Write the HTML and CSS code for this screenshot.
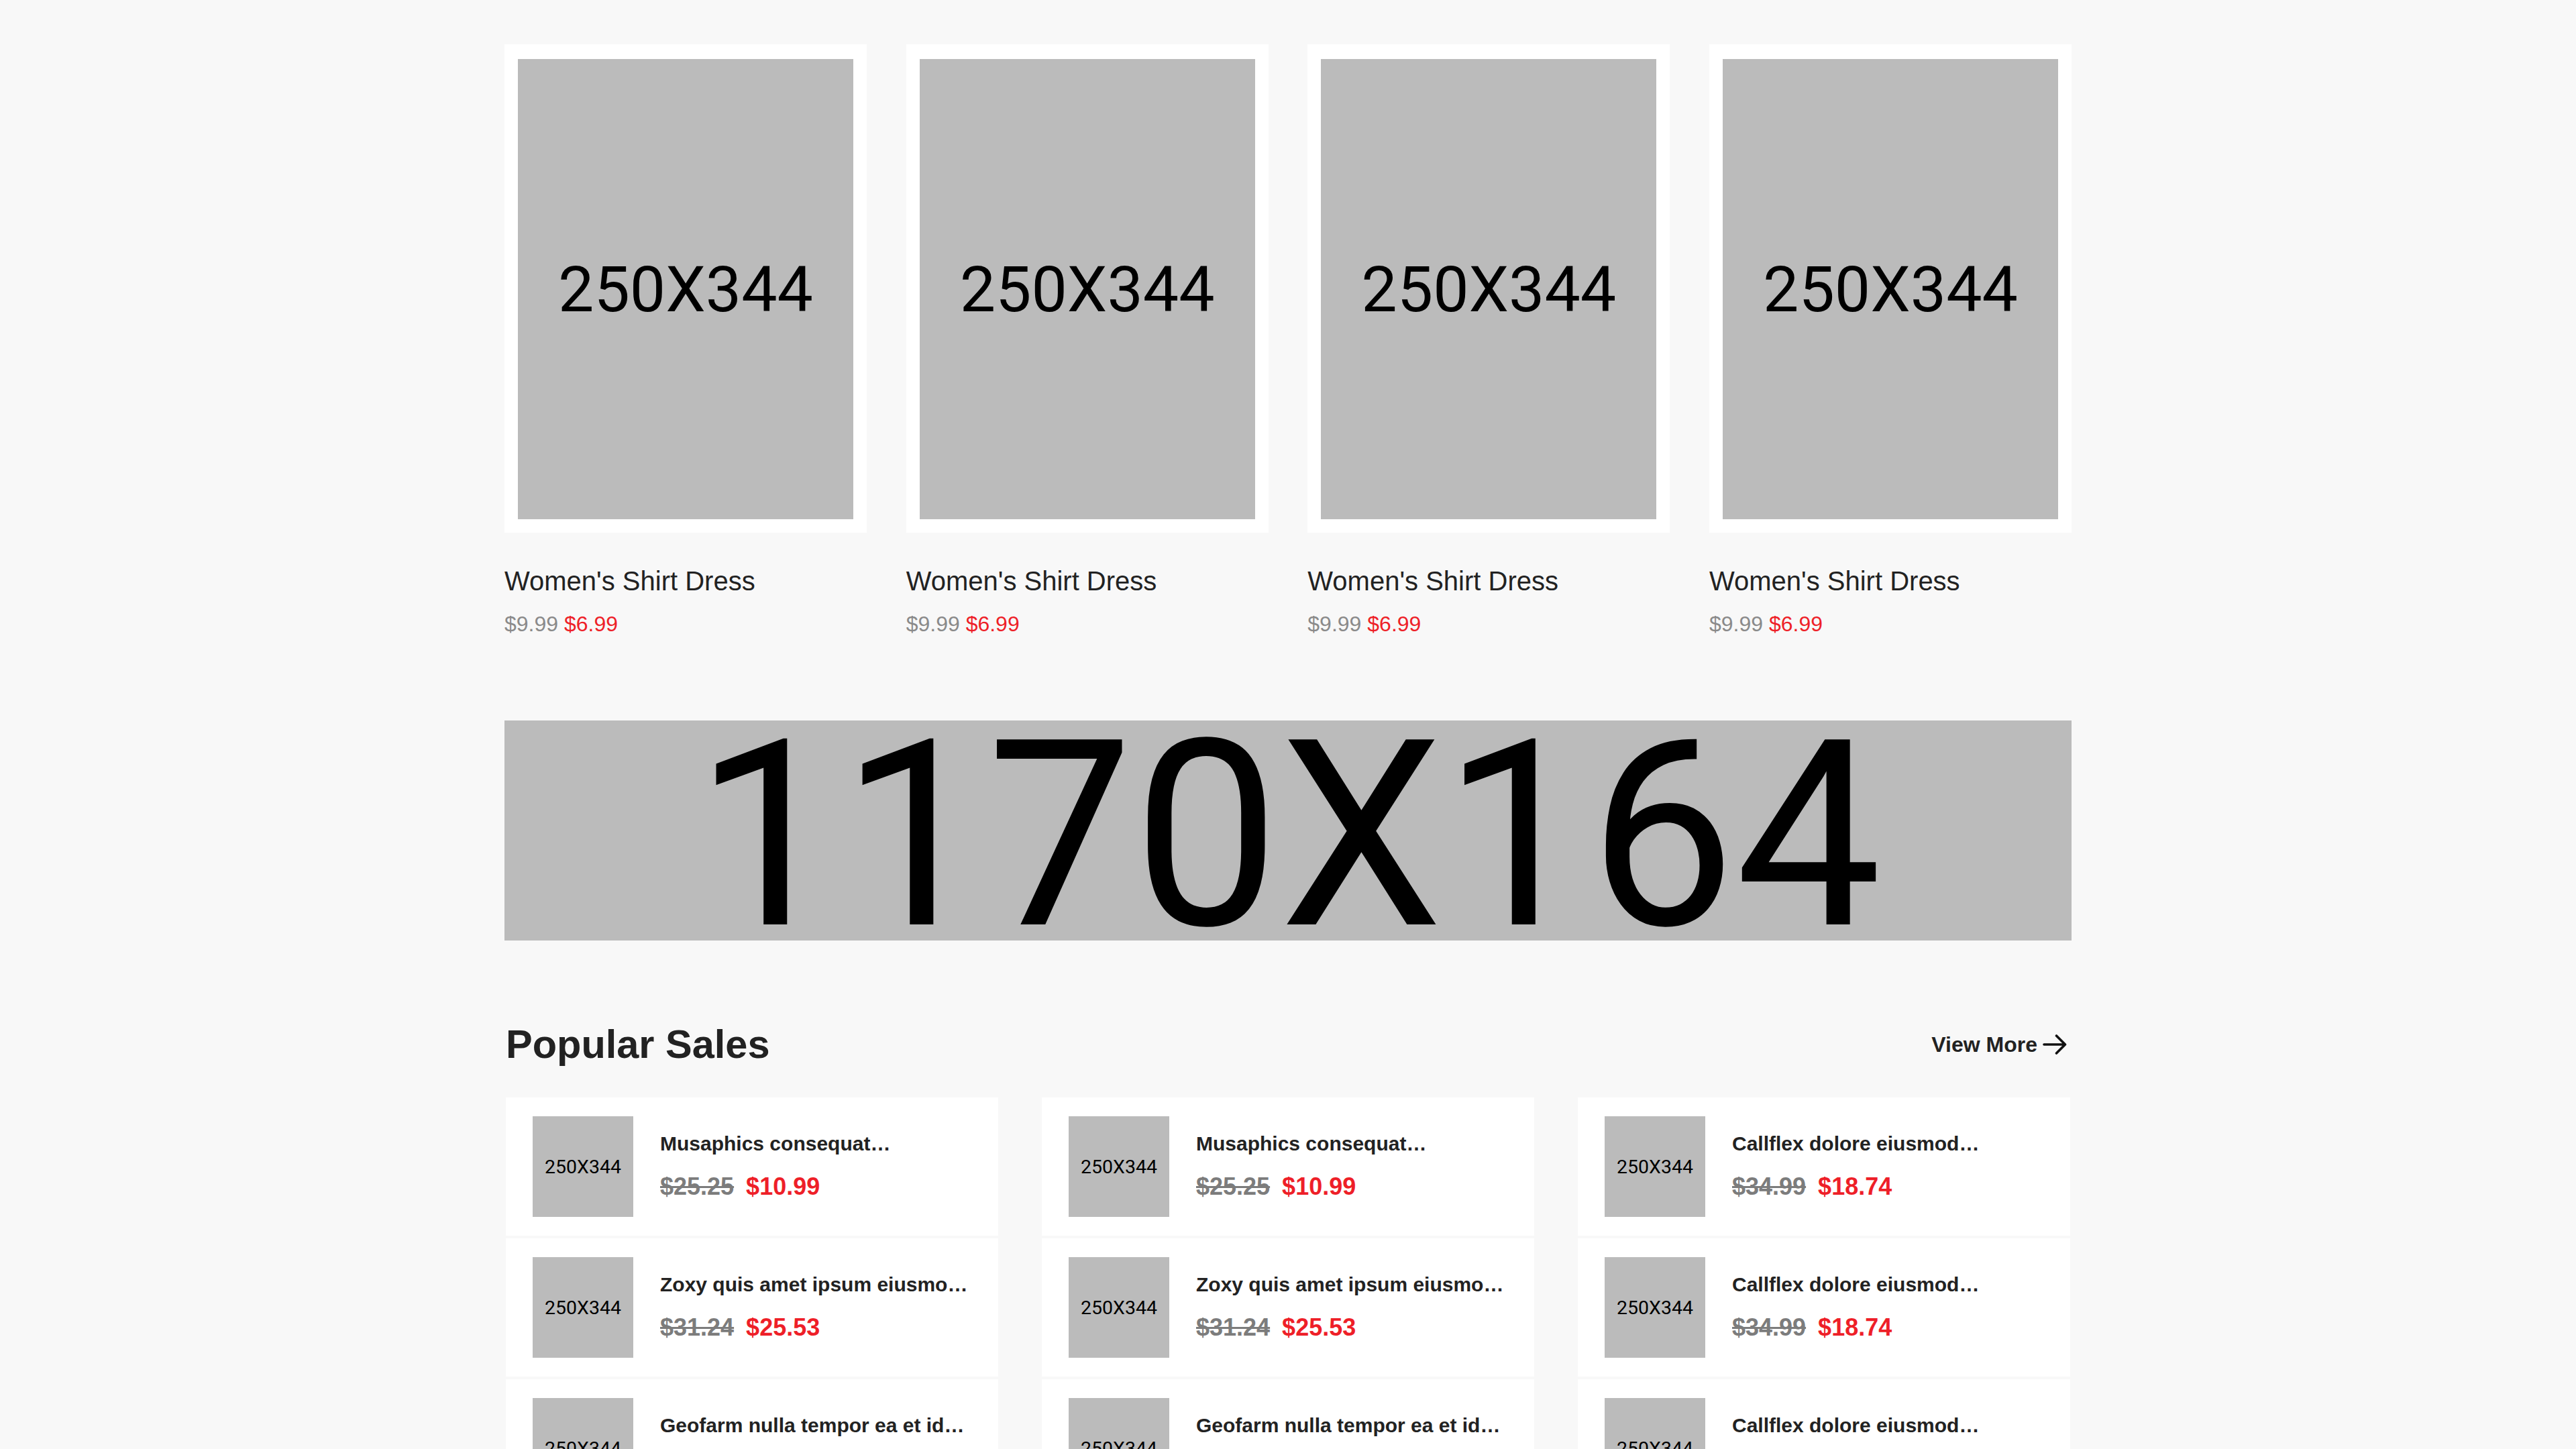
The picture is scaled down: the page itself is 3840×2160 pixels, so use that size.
FILE: index.html
```html
<!DOCTYPE html>
<html lang="en">
<head>
<meta charset="utf-8">
<title>Shop</title>
<link rel="stylesheet" href="styles.css">
</head>
<body>
<main class="page">
  <section class="products">
    <article class="product">
      <div class="product-card"><div class="ph ph-product">250X344</div></div>
      <h3 class="product-title">Women's Shirt Dress</h3>
      <div class="product-price"><span class="old">$9.99</span> <span class="new">$6.99</span></div>
    </article>
    <article class="product">
      <div class="product-card"><div class="ph ph-product">250X344</div></div>
      <h3 class="product-title">Women's Shirt Dress</h3>
      <div class="product-price"><span class="old">$9.99</span> <span class="new">$6.99</span></div>
    </article>
    <article class="product">
      <div class="product-card"><div class="ph ph-product">250X344</div></div>
      <h3 class="product-title">Women's Shirt Dress</h3>
      <div class="product-price"><span class="old">$9.99</span> <span class="new">$6.99</span></div>
    </article>
    <article class="product">
      <div class="product-card"><div class="ph ph-product">250X344</div></div>
      <h3 class="product-title">Women's Shirt Dress</h3>
      <div class="product-price"><span class="old">$9.99</span> <span class="new">$6.99</span></div>
    </article>
  </section>

  <div class="banner ph">1170X164</div>

  <section class="popular">
    <header class="popular-head">
      <h2 class="popular-title">Popular Sales</h2>
      <a class="view-more" href="#">View More
        <svg class="arrow" viewBox="0 0 36 36" width="36" height="36" aria-hidden="true">
          <path d="M2 18 H33 M20.5 5 L33.5 18 L20.5 31" fill="none" stroke="#111" stroke-width="3.6" stroke-linecap="round" stroke-linejoin="round"/>
        </svg>
      </a>
    </header>
    <div class="sales-grid">
      <div class="sale-col">
        <div class="sale-item">
          <div class="ph ph-thumb">250X344</div>
          <div class="sale-info">
            <div class="sale-name">Musaphics consequat…</div>
            <div class="sale-price"><span class="old">$25.25</span><span class="new">$10.99</span></div>
          </div>
        </div>
        <div class="sale-item">
          <div class="ph ph-thumb">250X344</div>
          <div class="sale-info">
            <div class="sale-name">Zoxy quis amet ipsum eiusmo…</div>
            <div class="sale-price"><span class="old">$31.24</span><span class="new">$25.53</span></div>
          </div>
        </div>
        <div class="sale-item">
          <div class="ph ph-thumb">250X344</div>
          <div class="sale-info">
            <div class="sale-name">Geofarm nulla tempor ea et id…</div>
            <div class="sale-price"><span class="old">$28.99</span><span class="new">$19.99</span></div>
          </div>
        </div>
      </div>
      <div class="sale-col">
        <div class="sale-item">
          <div class="ph ph-thumb">250X344</div>
          <div class="sale-info">
            <div class="sale-name">Musaphics consequat…</div>
            <div class="sale-price"><span class="old">$25.25</span><span class="new">$10.99</span></div>
          </div>
        </div>
        <div class="sale-item">
          <div class="ph ph-thumb">250X344</div>
          <div class="sale-info">
            <div class="sale-name">Zoxy quis amet ipsum eiusmo…</div>
            <div class="sale-price"><span class="old">$31.24</span><span class="new">$25.53</span></div>
          </div>
        </div>
        <div class="sale-item">
          <div class="ph ph-thumb">250X344</div>
          <div class="sale-info">
            <div class="sale-name">Geofarm nulla tempor ea et id…</div>
            <div class="sale-price"><span class="old">$28.99</span><span class="new">$19.99</span></div>
          </div>
        </div>
      </div>
      <div class="sale-col">
        <div class="sale-item">
          <div class="ph ph-thumb">250X344</div>
          <div class="sale-info">
            <div class="sale-name">Callflex dolore eiusmod…</div>
            <div class="sale-price"><span class="old">$34.99</span><span class="new">$18.74</span></div>
          </div>
        </div>
        <div class="sale-item">
          <div class="ph ph-thumb">250X344</div>
          <div class="sale-info">
            <div class="sale-name">Callflex dolore eiusmod…</div>
            <div class="sale-price"><span class="old">$34.99</span><span class="new">$18.74</span></div>
          </div>
        </div>
        <div class="sale-item">
          <div class="ph ph-thumb">250X344</div>
          <div class="sale-info">
            <div class="sale-name">Callflex dolore eiusmod…</div>
            <div class="sale-price"><span class="old">$34.99</span><span class="new">$18.74</span></div>
          </div>
        </div>
      </div>
    </div>
  </section>
</main>
</body>
</html>
```

FILE: styles.css
```css
html, body {
  margin: 0;
  padding: 0;
}
body {
  background: #f8f8f8;
  font-family: "Liberation Sans", Arial, sans-serif;
  color: #222;
}
.page {
  width: 2336px;
  margin: 0 auto;
  padding-top: 66px;
}

/* placeholder images */
.ph {
  background: #bbbbbb;
  color: #000;
  font-family: Roboto, "Liberation Sans", sans-serif;
  display: flex;
  align-items: center;
  justify-content: center;
  overflow: hidden;
  white-space: nowrap;
}

/* top products */
.products {
  display: grid;
  grid-template-columns: repeat(4, 540px);
  justify-content: space-between;
}
.product-card {
  background: #fff;
  padding: 22px 20px 20px;
}
.ph-product {
  height: 686px;
  font-size: 95px;
}
.product-title {
  margin: 48px 0 0;
  font-size: 40px;
  line-height: 48px;
  font-weight: 400;
  color: #222;
}
.product-price {
  margin-top: 20px;
  font-size: 32px;
  line-height: 40px;
}
.product-price .old {
  color: #8a8a8a;
}
.new {
  color: #ee1f28;
}

/* banner */
.banner {
  box-sizing: border-box;
  margin-top: 124px;
  height: 328px;
  padding-top: 10.5px;
  align-items: flex-start;
  font-size: 388px;
  line-height: 322px;
}

/* popular sales */
.popular {
  margin-top: 120px;
  padding: 0 2px;
}
.popular-head {
  display: flex;
  align-items: center;
  justify-content: space-between;
  height: 70px;
}
.popular-title {
  margin: 0;
  font-size: 59.5px;
  line-height: 70px;
  font-weight: 700;
  color: #222;
}
.view-more {
  display: flex;
  align-items: center;
  gap: 8px;
  margin-right: 5px;
  font-size: 32px;
  line-height: 40px;
  font-weight: 700;
  color: #222;
  text-decoration: none;
}
.arrow {
  display: block;
}
.sales-grid {
  margin-top: 44px;
  display: grid;
  grid-template-columns: repeat(3, 734px);
  justify-content: space-between;
}
.sale-col {
  display: flex;
  flex-direction: column;
  gap: 4px;
}
.sale-item {
  display: flex;
  align-items: center;
  gap: 40px;
  padding: 28px 40px;
  background: #fff;
}
.ph-thumb {
  flex: 0 0 150px;
  width: 150px;
  height: 150px;
  font-size: 28.5px;
}
.sale-info {
  display: flex;
  flex-direction: column;
}
.sale-name {
  font-size: 30px;
  line-height: 36px;
  font-weight: 700;
  color: #222;
  white-space: nowrap;
}
.sale-price {
  margin-top: 24px;
  display: flex;
  gap: 18px;
  font-size: 36px;
  line-height: 44px;
  font-weight: 700;
}
.sale-price .old {
  color: #7c7c7c;
  text-decoration: line-through;
}
```
